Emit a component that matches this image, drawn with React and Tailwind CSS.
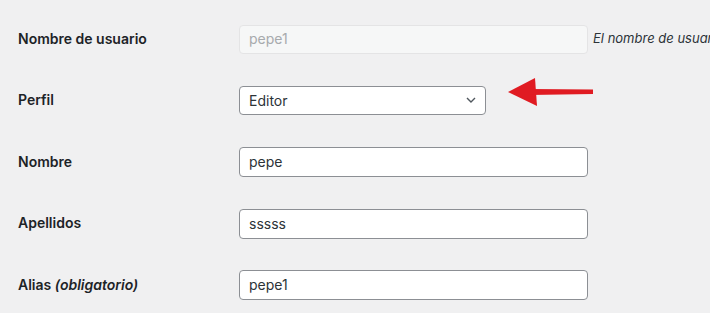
import React from "react";

function Row({ label, children, className = "" }) {
  return (
    <div className={"flex items-center h-[30px] " + className}>
      <div className="w-[221px] shrink-0 mb-[2px] text-[14px] font-semibold text-[#1d2327] whitespace-nowrap">
        {label}
      </div>
      {children}
    </div>
  );
}

function TextInput({ value }) {
  return (
    <div className="w-[349px] h-[30px] shrink-0 flex items-center bg-white border border-[#8c8f94] rounded-[4px] pl-[9px] pb-[1px] text-[14px] text-[#2c3338]">
      {value}
    </div>
  );
}

export default function App() {
  return (
    <div
      className="relative w-[710px] h-[313px] overflow-hidden bg-[#f0f0f1] pt-[24px] pl-[18px] flex flex-col gap-[31.5px]"
      style={{ fontFamily: "Inter, 'Noto Sans', sans-serif" }}
    >
      <Row label="Nombre de usuario">
        <div className="w-[349px] h-[29px] shrink-0 flex items-center bg-[#f6f7f7] border border-[#e4e4e5] rounded-[4px] pl-[9px] pb-[1px] text-[14px] text-[#a7aaad]">
          pepe1
        </div>
        <span className="ml-[5px] mb-[1px] italic text-[13px] text-[#2c3338] whitespace-nowrap">
          El nombre de usuario no puede cambiarse.
        </span>
      </Row>
      <Row label="Perfil">
        <div className="w-[247px] h-[29px] shrink-0 flex items-center justify-between bg-white border border-[#8c8f94] rounded-[4px] pl-[9px] pr-[8px] pb-[1px] text-[14px] text-[#2c3338]">
          <span>Editor</span>
          <svg width="12" height="8" viewBox="0 0 12 8" fill="none">
            <path d="M2 2 L6 6 L10 2" stroke="#50575e" strokeWidth="1.4" />
          </svg>
        </div>
      </Row>
      <Row label="Nombre">
        <TextInput value="pepe" />
      </Row>
      <Row label="Apellidos">
        <TextInput value="sssss" />
      </Row>
      <Row label={<span>Alias <em className="font-semibold">(obligatorio)</em></span>}>
        <TextInput value="pepe1" />
      </Row>

      <svg
        className="absolute left-[500px] top-[72px]"
        width="100"
        height="40"
        viewBox="500 72 100 40"
      >
        <polygon points="508,92 535,78 537,106" fill="#e01b22" />
        <polygon points="530,89 593,89.5 593,94 530,95" fill="#e01b22" />
      </svg>
    </div>
  );
}
